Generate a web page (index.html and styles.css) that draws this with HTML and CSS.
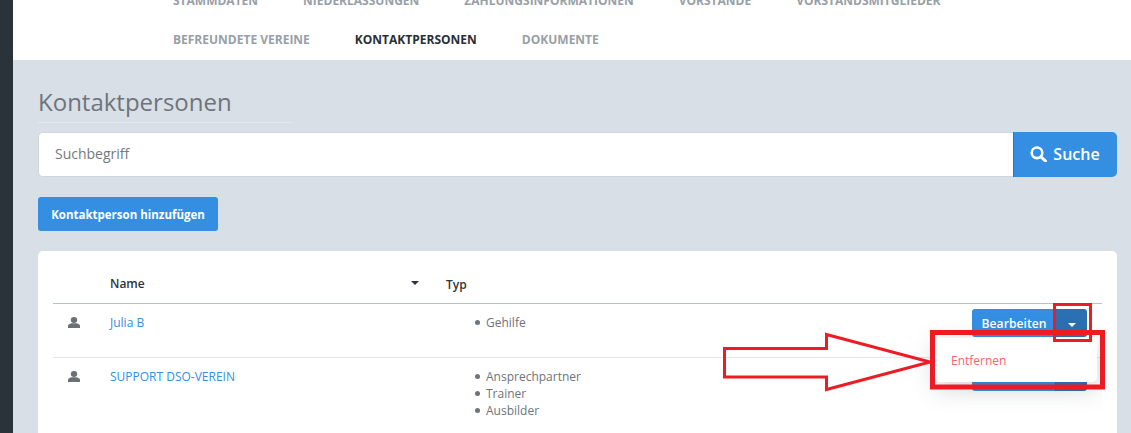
FILE: index.html
```html
<!DOCTYPE html>
<html lang="de">
<head>
<meta charset="utf-8">
<title>Kontaktpersonen</title>
<link rel="stylesheet" href="styles.css">
</head>
<body>
<div class="app">
  <aside class="rail"></aside>
  <main class="main">
    <nav class="tabs">
      <div class="tab-row tab-row-top">
        <a>Stammdaten</a><a>Niederlassungen</a><a>Zahlungsinformationen</a><a>Vorstände</a><a>Vorstandsmitglieder</a>
      </div>
      <div class="tab-row">
        <a>Befreundete Vereine</a><a class="active">Kontaktpersonen</a><a>Dokumente</a>
      </div>
    </nav>
    <section class="content">
      <h1 class="title">Kontaktpersonen</h1>
      <form class="search">
        <div class="search-input">Suchbegriff</div>
        <button type="button" class="search-btn">
          <svg class="search-icon" viewBox="0 0 17 16" width="17" height="16"><circle cx="7" cy="6.800" r="5.300" fill="none" stroke="#fff" stroke-width="2.600"/><path d="M11 10.800 15.500 15" stroke="#fff" stroke-width="3" stroke-linecap="round"/></svg>
          Suche
        </button>
      </form>
      <button type="button" class="add-btn">Kontaktperson hinzufügen</button>
      <div class="card">
        <div class="row head">
          <div class="c-icon"></div>
          <div class="c-name">Name<span class="sort"></span></div>
          <div class="c-type">Typ</div>
        </div>
        <div class="row first">
          <div class="c-icon"><svg viewBox="0 0 12 11" width="12" height="11"><ellipse cx="6" cy="3" rx="3.2" ry="3" fill="#6b6f76"/><path d="M0 11V8.600C0 7.400 2 6.600 4 6.200h4c2 .4 4 1.200 4 2.400V11z" fill="#6b6f76"/></svg></div>
          <div class="c-name"><a>Julia B</a></div>
          <ul class="c-list"><li>Gehilfe</li></ul>
          <div class="actions">
            <button type="button" class="edit">Bearbeiten</button><button type="button" class="caret"><span></span></button>
          </div>
        </div>
        <div class="row second">
          <div class="c-icon"><svg viewBox="0 0 12 11" width="12" height="11"><ellipse cx="6" cy="3" rx="3.2" ry="3" fill="#6b6f76"/><path d="M0 11V8.600C0 7.400 2 6.600 4 6.200h4c2 .4 4 1.200 4 2.400V11z" fill="#6b6f76"/></svg></div>
          <div class="c-name"><a>SUPPORT DSO-VEREIN</a></div>
          <ul class="c-list"><li>Ansprechpartner</li><li>Trainer</li><li>Ausbilder</li></ul>
          <div class="actions">
            <button type="button" class="edit">Bearbeiten</button><button type="button" class="caret"><span></span></button>
          </div>
        </div>
      </div>
    </section>
  </main>
</div>
<div class="menu-clip"><div class="menu"><a>Entfernen</a></div></div>
<svg class="markup" width="1131" height="433" viewBox="0 0 1131 433">
  <g fill="none" stroke="#ed1c24">
    <rect x="1054.500" y="304.500" width="36" height="36" stroke-width="3"/>
    <rect x="932.500" y="332.500" width="170" height="54.500" stroke-width="5"/>
    <path d="M724.500 348.500H826.500V334.500L930 362 826.500 389.500V377H724.500Z" stroke-width="3"/>
  </g>
</svg>
</body>
</html>
```
FILE: styles.css
```css
* { box-sizing: border-box; }
html, body { margin: 0; height: 433px; overflow: hidden; background: #d8dfe7; }
body { font-family: "Open Sans", sans-serif; font-size: 12px; color: #6f747b; position: relative; }
button { font-family: inherit; border: 0; cursor: pointer; }

.app { display: flex; height: 433px; }
.rail { width: 13px; flex: none; background: #2a323a; }
.main { flex: 1; min-width: 0; }

.tabs { height: 60px; background: #fff; overflow: hidden; padding-left: 160px; }
.tab-row { display: flex; gap: 45px; height: 22px; align-items: center; }
.tab-row-top { margin-top: -11px; margin-bottom: 17px; }
.tab-row a { font-size: 12px; font-weight: 700; text-transform: uppercase; color: #98a0a7; white-space: nowrap; }
.tab-row a.active { color: #2a2f35; }

.content { padding: 26px 14px 0 25px; }
.title { margin: 0 0 9px; width: 255px; height: 37px; line-height: 32px; font-size: 24px; font-weight: 400; color: #6f747b; border-bottom: 1px solid #e3e8ee; }

.search { display: flex; height: 45px; margin-bottom: 20px; }
.search-input { flex: 1; background: #fff; border: 1px solid #cfd6de; border-right: 0; border-radius: 5px 0 0 5px; padding-left: 16px; line-height: 41px; font-size: 14px; color: #74797f; }
.search-btn { width: 104px; display: flex; align-items: center; justify-content: center; gap: 6px; padding: 0 1px 2px 0; background: #348ee2; color: #fff; font-size: 16px; font-weight: 600; border-radius: 0 5px 5px 0; border-left: 1px solid #2a76bd; }

.add-btn { display: block; width: 180px; height: 34px; background: #348ee2; color: #fff; font-size: 11.500px; font-weight: 700; border-radius: 3px; margin-bottom: 20px; padding: 0; }

.card { background: #fff; border-radius: 5px; padding: 0 15px; height: 200px; }
.row { display: flex; align-items: flex-start; position: relative; }
.head { height: 53px; border-bottom: 1px solid #b8c0c9; padding-top: 24px; color: #2f343a; font-weight: 600; }
.first { height: 54px; border-bottom: 1px solid #e3e6ea; padding-top: 10px; }
.second { padding-top: 10px; }
.c-icon { width: 57px; padding: 3px 0 0 15px; line-height: 0; }
.c-name { width: 336px; position: relative; line-height: 18px; }
.c-name a { color: #348ee2; }
.sort { position: absolute; right: 27px; top: 6px; border: 4px solid transparent; border-top: 4px solid #2f343a; border-bottom: 0; }
.c-type { line-height: 20px; }
.c-list { margin: 0; padding: 0 0 0 40px; list-style: none; line-height: 17px; }
.c-list li { position: relative; }
.c-list li::before { content: ""; position: absolute; left: -11px; top: 6px; width: 5px; height: 5px; border-radius: 50%; background: #6f747b; }

.actions { position: absolute; right: 15px; top: 5px; display: flex; height: 28px; }
.edit { width: 83px; background: #348ee2; color: #fff; font-size: 12.200px; font-weight: 600; border-radius: 3px 0 0 3px; padding: 0 0 0 1px; }
.caret { width: 32px; background: #2b70b3; border-left: 1px solid #2565a3; border-radius: 0 3px 3px 0; display: flex; align-items: center; justify-content: center; padding: 0; }
.caret span { margin-top: 3px; border: 4px solid transparent; border-top: 4px solid #fff; border-bottom: 0; }

.menu-clip { position: absolute; left: 900px; top: 300px; width: 202px; height: 133px; overflow: hidden; }
.menu { position: absolute; left: 35px; top: 38px; width: 162px; height: 44px; background: #fff; border-radius: 5px; box-shadow: 0 6px 24px rgba(60, 70, 80, .25); padding: 14px 0 0 16px; }
.menu a { color: #f8646a; font-size: 12px; line-height: 17px; display: block; }

.markup { position: absolute; left: 0; top: 0; pointer-events: none; }
```
